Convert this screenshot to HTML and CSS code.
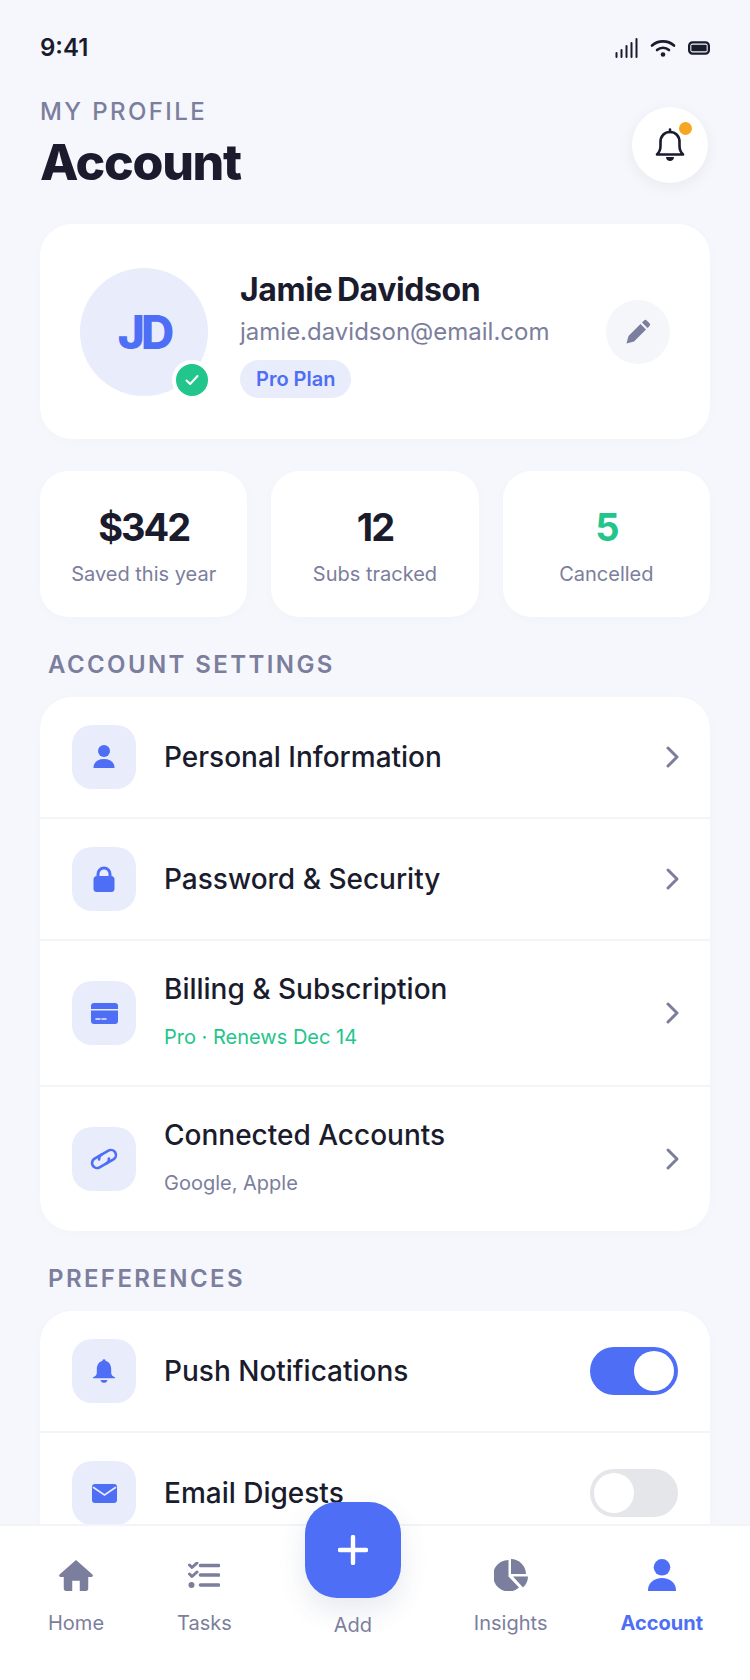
FILE: index.html
```html
<!DOCTYPE html>
<html lang="en">
<head>
    <meta charset="UTF-8">
    <meta name="viewport" content="width=device-width, initial-scale=1.0">
    <link rel="stylesheet" href="styles.css">
    <title>Account</title>
</head>
<body>
    <div class="phone">
        <div class="content">
            <div class="statusBar">
                <span class="time">9:41</span>
                <div class="statusIcons">
                    <svg width="23" height="20" viewBox="0 0 23 20"><g fill="none" stroke="#1a1c2e" stroke-width="2" stroke-linecap="round"><path d="M1.500 15v4M6.500 12v7M11.500 8v11M16.500 5v14M21.500 1v18"/></g></svg>
                    <svg width="26" height="18" viewBox="0 0 26 18"><g fill="none" stroke="#1a1c2e" stroke-width="2.600" stroke-linecap="round"><path d="M2 6.500C8 1 18 1 24 6.500"/><path d="M7 11c3.500-3 8.500-3 12 0"/></g><circle cx="13" cy="15.500" r="2.300" fill="#1a1c2e"/></svg>
                    <svg width="22" height="14" viewBox="0 0 23 14"><rect x="1.200" y="1.200" width="20.600" height="11.600" rx="3.500" fill="none" stroke="#1a1c2e" stroke-width="2.400"/><rect x="3.500" y="3.500" width="16" height="7" rx="1" fill="#1a1c2e"/></svg>
                </div>
            </div>

            <div class="header">
                <div>
                    <p class="eyebrow">MY PROFILE</p>
                    <h1>Account</h1>
                </div>
                <div class="bellBtn">
                    <svg width="32" height="34" viewBox="0 0 32 34"><g fill="none" stroke="#1a1c2e" stroke-width="2.600" stroke-linejoin="round" stroke-linecap="round"><path d="M3 26.500c2.500-2.500 3.500-4.500 3.500-8.500v-4C6.500 8 10.500 4 16 4s9.500 4 9.500 10v4c0 4 1 6 3.500 8.500z"/><path d="M16 1.500V4"/></g><path d="M12 29h8c0 2.500-2 4-4 4s-4-1.500-4-4z" fill="#1a1c2e"/></svg>
                    <span class="bellDot"></span>
                </div>
            </div>

            <div class="profileCard">
                <div class="avatar">
                    JD
                    <span class="verified">
                        <svg width="16" height="16" viewBox="0 0 16 16"><path d="M2.500 8.500l3.700 3.500 7.300-8" fill="none" stroke="#fff" stroke-width="2" stroke-linecap="round" stroke-linejoin="round"/></svg>
                    </span>
                </div>
                <div class="profileInfo">
                    <h2>Jamie Davidson</h2>
                    <p class="email">jamie.davidson@email.com</p>
                    <span class="plan">Pro Plan</span>
                </div>
                <div class="editBtn">
                    <svg width="28" height="28" viewBox="0 0 28 28"><path d="M2.500 25.500l2-7.500L16.500 6l5.500 5.500L10 23.500z" fill="#7b7e9c"/><path d="M18 4.500l2-2a1.900 1.900 0 0 1 2.700 0l2.800 2.800a1.900 1.900 0 0 1 0 2.700l-2 2z" fill="#7b7e9c"/></svg>
                </div>
            </div>

            <div class="stats">
                <div class="stat">
                    <strong>$342</strong>
                    <span>Saved this year</span>
                </div>
                <div class="stat">
                    <strong>12</strong>
                    <span>Subs tracked</span>
                </div>
                <div class="stat">
                    <strong class="green">5</strong>
                    <span>Cancelled</span>
                </div>
            </div>

            <h3 class="sectionTitle">ACCOUNT SETTINGS</h3>
            <div class="list">
                <div class="row">
                    <div class="rowIcon">
                        <svg width="28" height="28" viewBox="0 0 28 28"><circle cx="14" cy="8" r="6"/><path d="M3.500 25c0-6 4.500-9 10.500-9s10.500 3 10.500 9z"/></svg>
                    </div>
                    <div class="rowText"><span class="rowTitle">Personal Information</span></div>
                    <svg class="chevron" width="16" height="24" viewBox="0 0 16 24"><path d="M3 3l9 9-9 9"/></svg>
                </div>
                <div class="row">
                    <div class="rowIcon">
                        <svg width="28" height="28" viewBox="0 0 28 28"><path d="M8 12V9a6 6 0 0 1 12 0v3" fill="none" stroke="#4d6ef5" stroke-width="3"/><rect x="3.500" y="11" width="21" height="16" rx="3.500"/></svg>
                    </div>
                    <div class="rowText"><span class="rowTitle">Password &amp; Security</span></div>
                    <svg class="chevron" width="16" height="24" viewBox="0 0 16 24"><path d="M3 3l9 9-9 9"/></svg>
                </div>
                <div class="row">
                    <div class="rowIcon">
                        <svg width="27" height="21" viewBox="0 0 27 21"><path d="M0 3a3 3 0 0 1 3-3h21a3 3 0 0 1 3 3v3H0z"/><path d="M0 7.500h27V18a3 3 0 0 1-3 3H3a3 3 0 0 1-3-3z"/><path d="M5 16h4M11 16h4" stroke="#e8ecfb" stroke-width="1.600" stroke-linecap="round"/></svg>
                    </div>
                    <div class="rowText">
                        <span class="rowTitle">Billing &amp; Subscription</span>
                        <span class="rowSub green">Pro · Renews Dec 14</span>
                    </div>
                    <svg class="chevron" width="16" height="24" viewBox="0 0 16 24"><path d="M3 3l9 9-9 9"/></svg>
                </div>
                <div class="row">
                    <div class="rowIcon">
                        <svg width="28" height="22" viewBox="0 0 28 22"><g transform="rotate(-30 14 11)" fill="none" stroke="#4d6ef5" stroke-width="2.600" stroke-linecap="round"><path d="M14 6H6a5 5 0 0 0 0 10h8a5 5 0 0 0 4.500-3"/><path d="M14 16h8a5 5 0 0 0 0-10h-8a5 5 0 0 0-4.500 3"/></g></svg>
                    </div>
                    <div class="rowText">
                        <span class="rowTitle">Connected Accounts</span>
                        <span class="rowSub">Google, Apple</span>
                    </div>
                    <svg class="chevron" width="16" height="24" viewBox="0 0 16 24"><path d="M3 3l9 9-9 9"/></svg>
                </div>
            </div>

            <h3 class="sectionTitle">PREFERENCES</h3>
            <div class="list">
                <div class="row">
                    <div class="rowIcon">
                        <svg width="22" height="24" viewBox="1 0 26 28"><path d="M14 0a2 2 0 0 1 2 2.300C20.500 3.200 22.500 7.500 22.500 12v4c0 2.500 1.500 4 4.500 5.500v1H1v-1c3-1.500 4.500-3 4.500-5.500v-4c0-4.500 2-8.800 6.500-9.700A2 2 0 0 1 14 0z"/><path d="M10 24.500h8c0 2-2 3.500-4 3.500s-4-1.500-4-3.500z"/></svg>
                    </div>
                    <div class="rowText"><span class="rowTitle">Push Notifications</span></div>
                    <span class="toggle on"><span class="thumb"></span></span>
                </div>
                <div class="row">
                    <div class="rowIcon">
                        <svg width="25" height="19" viewBox="0 0 25 19"><rect width="25" height="19" rx="3"/><path d="M1.500 3.500l11 7.500 11-7.500" fill="none" stroke="#e8ecfb" stroke-width="1.600" stroke-linecap="round"/></svg>
                    </div>
                    <div class="rowText"><span class="rowTitle">Email Digests</span></div>
                    <span class="toggle"><span class="thumb"></span></span>
                </div>
            </div>
        </div>

        <div class="nav">
            <div class="navItem">
                <div class="navIcon">
                    <svg width="36" height="32" viewBox="0 0 38 34"><path d="M19 1L1.500 16.500a1.500 1.500 0 0 0 1 2.500H6v12a3 3 0 0 0 3 3h6V23h8v11h6a3 3 0 0 0 3-3V19h3.500a1.500 1.500 0 0 0 1-2.500z" fill="#7b7e9c"/></svg>
                </div>
                <span>Home</span>
            </div>
            <div class="navItem">
                <div class="navIcon">
                    <svg width="32" height="26" viewBox="0 0 32 26"><g fill="none" stroke="#7b7e9c" stroke-width="3" stroke-linecap="round" stroke-linejoin="round"><path d="M1.500 3l2.500 2.500L9 1"/><path d="M1.500 12l2.500 2.500L9 10"/></g><path d="M12.500 3.500h18M12.500 13h18M12.500 23h18" stroke="#7b7e9c" stroke-width="3.600" stroke-linecap="round"/><circle cx="3.500" cy="23" r="3" fill="#7b7e9c"/></svg>
                </div>
                <span>Tasks</span>
            </div>
            <div class="navItem addItem">
                <div class="fab">
                    <svg width="30" height="30" viewBox="0 0 30 30"><path d="M15 2v26M2 15h26" stroke="#fff" stroke-width="4.400" stroke-linecap="round"/></svg>
                </div>
                <span>Add</span>
            </div>
            <div class="navItem">
                <div class="navIcon">
                    <svg width="34" height="32" viewBox="0 0 34 32"><path d="M14.500 1v16.500l10.500 11A15.700 15.700 0 1 1 14.500 1z" fill="#7b7e9c"/><path d="M17 0a15.500 15.500 0 0 1 15 15H17z" fill="#7b7e9c"/><path d="M19 17.500h15a16 16 0 0 1-5 11z" fill="#7b7e9c"/></svg>
                </div>
                <span>Insights</span>
            </div>
            <div class="navItem active">
                <div class="navIcon">
                    <svg width="28" height="32" viewBox="0 0 28 32"><circle cx="14" cy="8.300" r="8.300" fill="#4d6ef5"/><path d="M0 32v-1c0-7 6-12 14-12s14 5 14 12v1z" fill="#4d6ef5"/></svg>
                </div>
                <span>Account</span>
            </div>
        </div>
    </div>
</body>
</html>
```

FILE: styles.css
```css
*{
    box-sizing: border-box;
    font-family: 'Inter', 'Liberation Sans', sans-serif;
}
body{
    background-color: #f5f7fc;
    color: #1a1c2e;
    margin: 0;
    padding: 0;
}
p, h1, h2, h3{
    margin: 0;
}
.phone{
    display: flex;
    flex-direction: column;
    height: 1680px;
    overflow: hidden;
}
.content{
    flex: 1;
    min-height: 0;
    overflow: hidden;
    padding: 28px 40px 0;
}

/* Barra de estado */
.statusBar{
    display: flex;
    justify-content: space-between;
    align-items: center;
    height: 38px;
}
.time{
    font-size: 24px;
    font-weight: 600;
}
.statusIcons{
    display: flex;
    align-items: center;
    gap: 12px;
    padding-top: 2px;
}

.header{
    display: flex;
    justify-content: space-between;
    align-items: center;
    margin-top: 31px;
}
.eyebrow{
    color: #7b7e9c;
    font-size: 24px;
    font-weight: 500;
    letter-spacing: 2.4px;
    line-height: 30px;
}
h1{
    font-size: 50px;
    font-weight: 800;
    letter-spacing: -1.3px;
    line-height: 62px;
    margin-top: 4px;
}
.bellBtn{
    position: relative;
    display: flex;
    justify-content: center;
    align-items: center;
    width: 76px;
    height: 76px;
    margin-right: 2px;
    border-radius: 50%;
    background: #fff;
    box-shadow: 0 4px 16px rgba(26, 28, 46, 0.06);
}
.bellDot{
    position: absolute;
    top: 15px;
    right: 16px;
    width: 13px;
    height: 13px;
    border-radius: 50%;
    background: #f5a623;
}

.profileCard{
    display: flex;
    align-items: center;
    gap: 32px;
    margin-top: 31px;
    padding: 42.500px 40px;
    border-radius: 32px;
    background: #fff;
    box-shadow: 0 2px 12px rgba(26, 28, 46, 0.02);
}
.avatar{
    position: relative;
    display: flex;
    flex: none;
    justify-content: center;
    align-items: center;
    width: 128px;
    height: 128px;
    border-radius: 50%;
    background: #e8ecfb;
    color: #4d6ef5;
    font-size: 46px;
    font-weight: 800;
    letter-spacing: -4px;
}
.verified{
    position: absolute;
    right: -4px;
    bottom: -4px;
    display: flex;
    justify-content: center;
    align-items: center;
    width: 40px;
    height: 40px;
    border: 4px solid #fff;
    border-radius: 50%;
    background: #22c58b;
}
.profileInfo{
    flex: 1;
    min-width: 0;
}
h2{
    margin-top: 3px;
    font-size: 32px;
    font-weight: 700;
    letter-spacing: -0.4px;
    word-spacing: -2.500px;
    line-height: 40px;
}
.email{
    margin-top: 5px;
    color: #7b7e9c;
    font-size: 24px;
    line-height: 34px;
}
.plan{
    display: inline-block;
    margin: 11px 0 -1px;
    padding: 0 16px;
    border-radius: 20px;
    background: #e8ecfb;
    color: #4d6ef5;
    font-size: 20px;
    font-weight: 600;
    line-height: 38px;
}
.editBtn{
    display: flex;
    flex: none;
    justify-content: center;
    align-items: center;
    width: 64px;
    height: 64px;
    border-radius: 50%;
    background: #f5f6fa;
}

.stats{
    display: grid;
    grid-template-columns: repeat(3, 1fr);
    gap: 24px;
    margin-top: 32px;
}
.stat{
    display: flex;
    flex-direction: column;
    align-items: center;
    height: 146px;
    padding-top: 33px;
    border-radius: 28px;
    background: #fff;
    box-shadow: 0 2px 12px rgba(26, 28, 46, 0.02);
}
.stat strong{
    font-size: 38px;
    font-weight: 700;
    letter-spacing: -2px;
    line-height: 46px;
}
.stat span{
    margin-top: 11px;
    color: #7b7e9c;
    font-size: 20px;
    line-height: 26px;
}
.green{
    color: #22c58b !important;
}

.sectionTitle{
    margin: 33px 0 17px 8px;
    color: #7b7e9c;
    font-size: 24px;
    font-weight: 600;
    letter-spacing: 2.4px;
    line-height: 30px;
}
.list{
    border-radius: 32px;
    background: #fff;
    overflow: hidden;
    box-shadow: 0 2px 12px rgba(26, 28, 46, 0.02);
}
.row{
    display: flex;
    align-items: center;
    gap: 28px;
    padding: 28px 32px;
    border-bottom: 2px solid #f3f4f7;
}
.row:last-child{
    border-bottom: none;
}
.rowIcon{
    display: flex;
    flex: none;
    justify-content: center;
    align-items: center;
    width: 64px;
    height: 64px;
    border-radius: 20px;
    background: #e8ecfb;
}
.rowIcon svg{
    fill: #4d6ef5;
}
.rowText{
    display: flex;
    flex: 1;
    flex-direction: column;
    min-width: 0;
}
.rowTitle{
    font-size: 28px;
    font-weight: 500;
    line-height: 40px;
}
.rowSub{
    margin: 9px 0 1px;
    color: #7b7e9c;
    font-size: 20px;
    line-height: 38px;
}
.chevron{
    flex: none;
    margin-right: -3px;
    fill: none;
    stroke: #7b7e9c;
    stroke-width: 3;
    stroke-linecap: round;
    stroke-linejoin: round;
}
.toggle{
    display: flex;
    flex: none;
    width: 88px;
    height: 48px;
    padding: 4px;
    border-radius: 24px;
    background: #e4e6ea;
}
.toggle.on{
    justify-content: flex-end;
    background: #4d6ef5;
}
.thumb{
    width: 40px;
    height: 40px;
    border-radius: 50%;
    background: #fff;
}

/* Barra inferior */
.nav{
    display: flex;
    flex: none;
    justify-content: space-around;
    height: 156px;
    padding: 28px 10.500px 0 11.500px;
    border-top: 2px solid #f3f4f7;
    background: #fff;
}
.navItem{
    display: flex;
    flex-direction: column;
    align-items: center;
    color: #7b7e9c;
    font-size: 20px;
    line-height: 26px;
}
.navIcon{
    display: flex;
    align-items: center;
    height: 32px;
    margin-top: 5px;
}
.navItem > span{
    margin-top: 19px;
}
.navItem.active{
    color: #4d6ef5;
    font-weight: 700;
}
.addItem{
    margin-top: -52px;
}
.addItem > span{
    margin-top: 14px;
}
.fab{
    display: flex;
    justify-content: center;
    align-items: center;
    width: 96px;
    height: 96px;
    border-radius: 32px;
    background: #4d6ef5;
    box-shadow: 0 12px 28px rgba(60, 70, 120, 0.12);
}
```
